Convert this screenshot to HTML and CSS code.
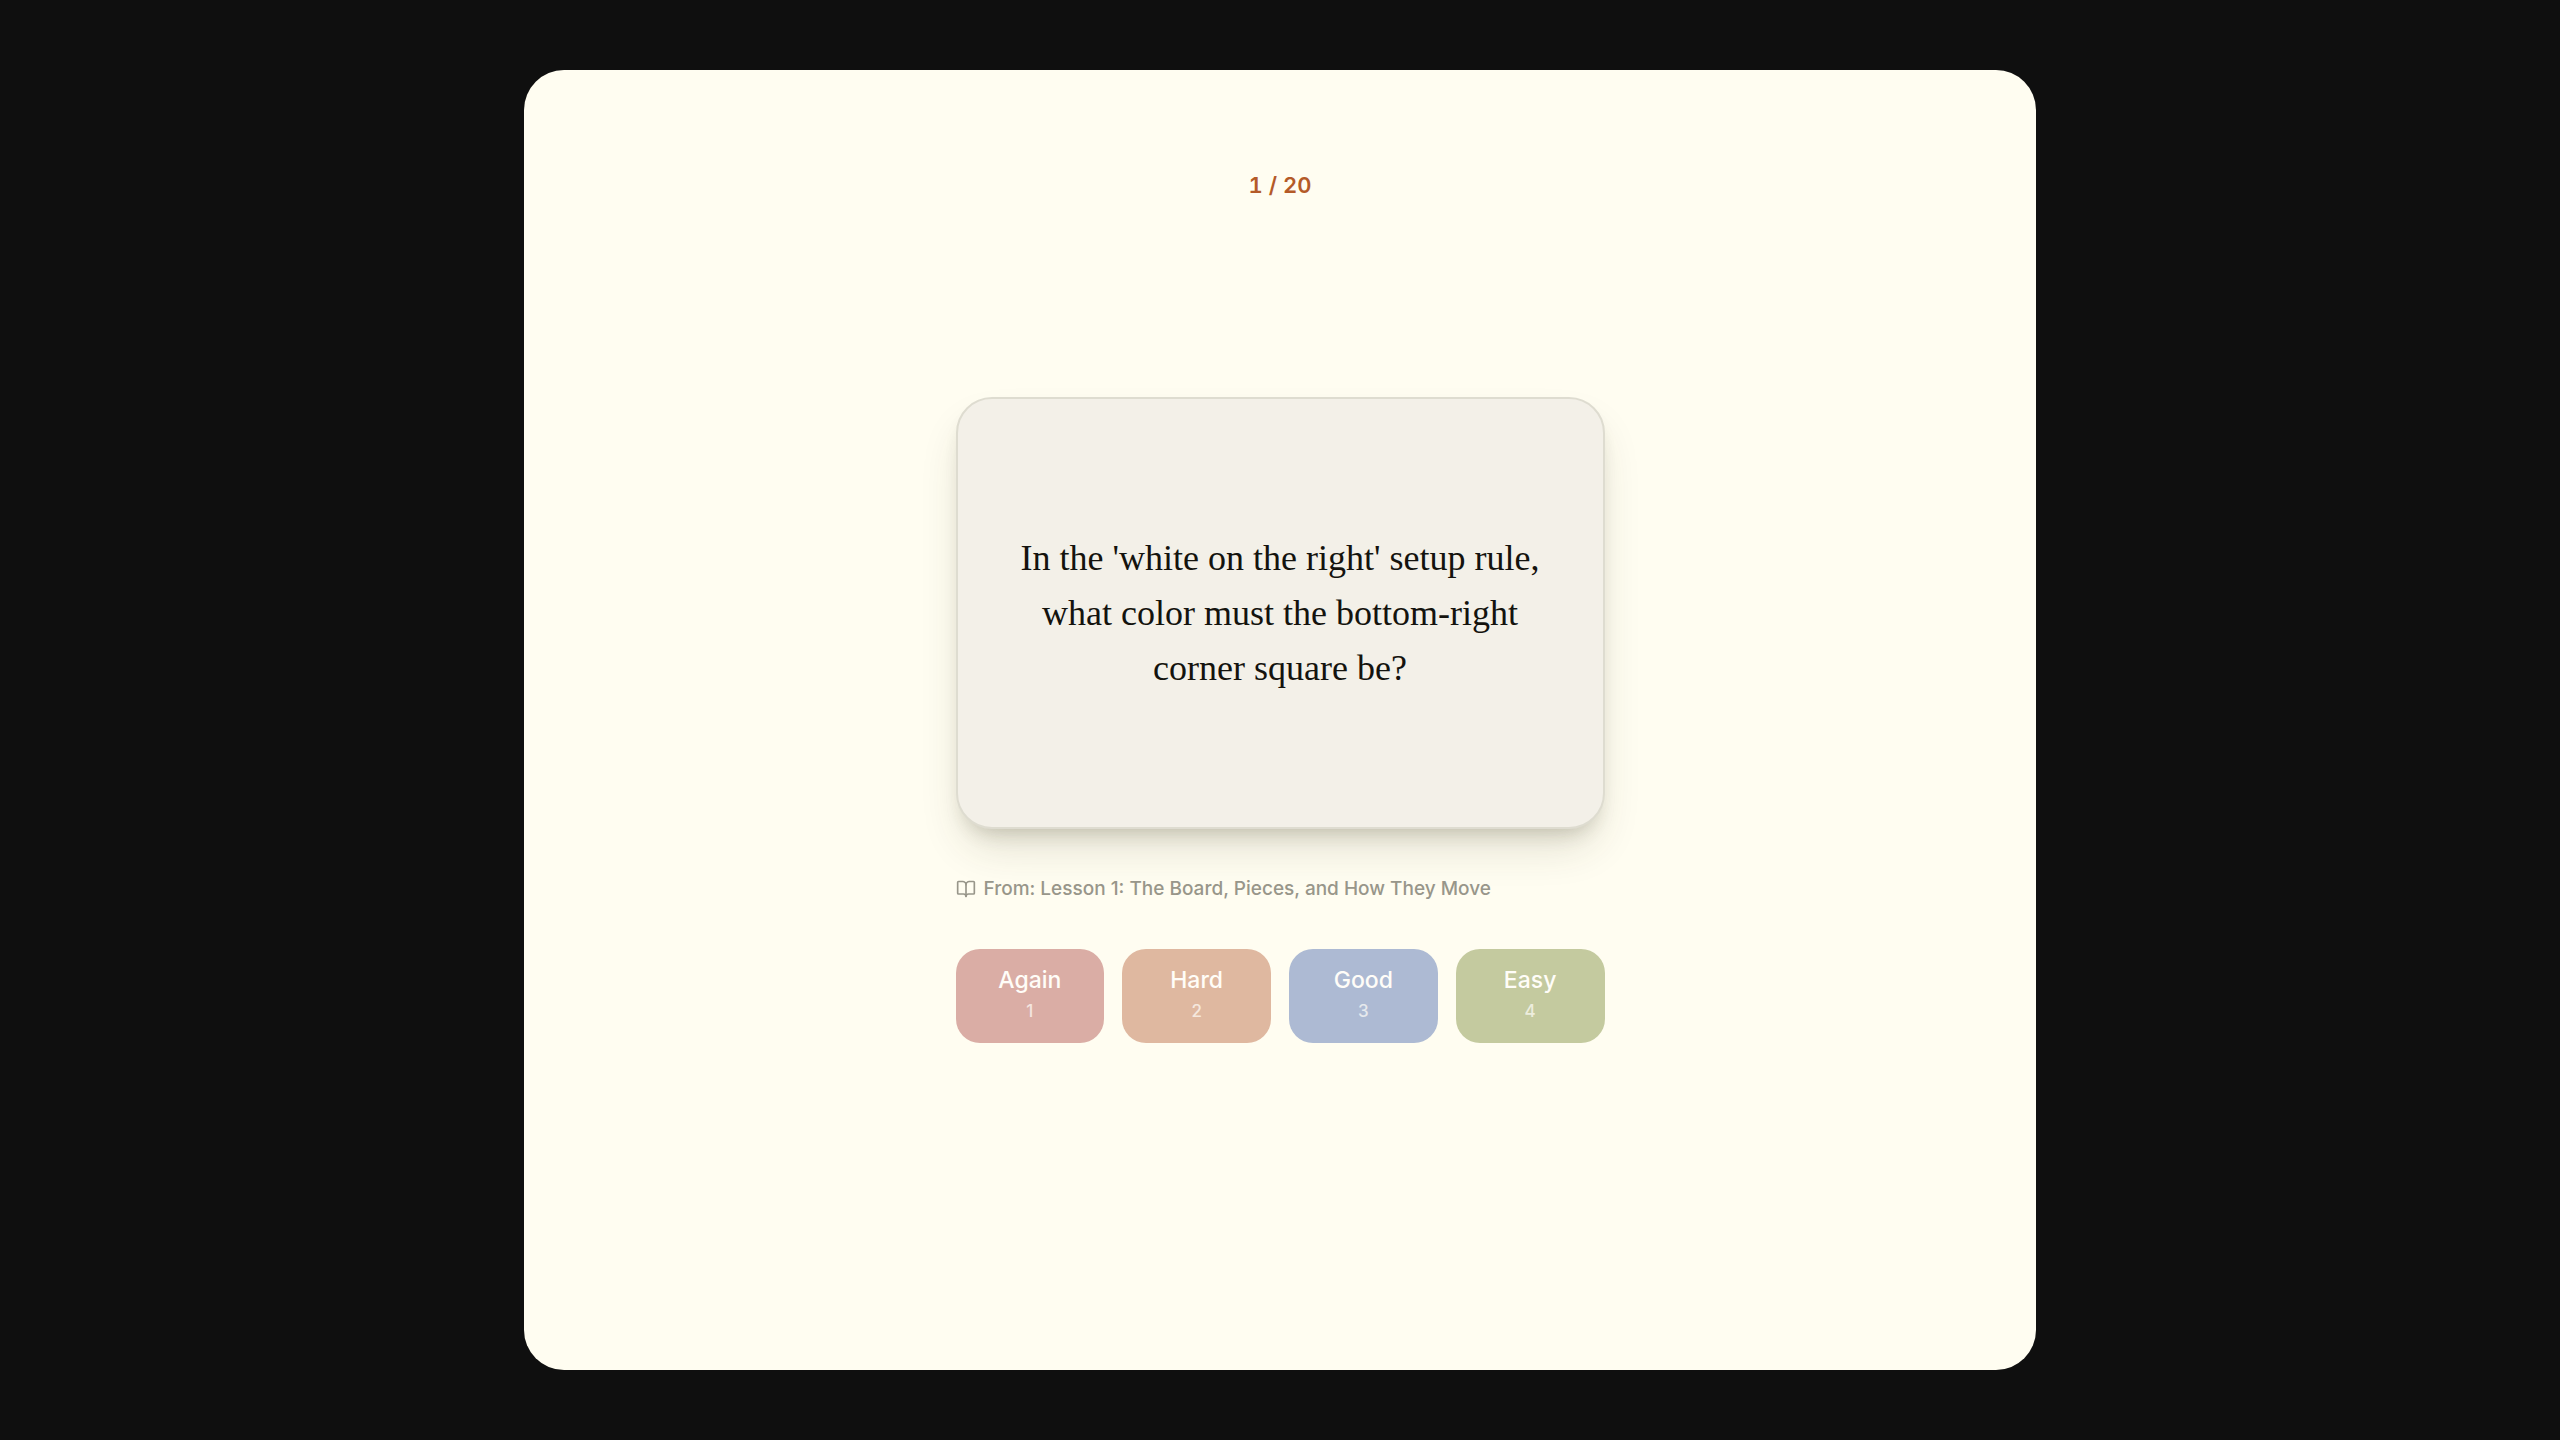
FILE: index.html
```html
<!DOCTYPE html>
<html lang="en">
  <head>
    <meta charset="UTF-8" />
    <meta name="viewport" content="width=device-width, initial-scale=1.0" />
    <title>Flashcards</title>
    <link rel="stylesheet" href="styles.css">
  </head>
  <body>
    <main class="panel">
      <div class="counter">1 / 20</div>
      <div class="review">
        <div class="card">
          <h1 class="question">
            In the 'white on the right' setup rule,<br />
            what color must the bottom-right<br />
            corner square be?
          </h1>
        </div>
        <div class="source">
          <svg class="source-icon" viewBox="0 0 24 24" aria-hidden="true">
            <path d="M12 7v14" />
            <path d="M3 18a1 1 0 0 1-1-1V4a1 1 0 0 1 1-1h5a4 4 0 0 1 4 4 4 4 0 0 1 4-4h5a1 1 0 0 1 1 1v13a1 1 0 0 1-1 1h-6a3 3 0 0 0-3 3 3 3 0 0 0-3-3z" />
          </svg>
          <span>From: Lesson 1: The Board, Pieces, and How They Move</span>
        </div>
        <div class="ratings">
          <button class="rating again">Again <span class="key">1</span></button>
          <button class="rating hard">Hard <span class="key">2</span></button>
          <button class="rating good">Good <span class="key">3</span></button>
          <button class="rating easy">Easy <span class="key">4</span></button>
        </div>
      </div>
    </main>
  </body>
</html>
```

FILE: styles.css
```css
* {
  box-sizing: border-box;
}
body {
  margin: 0;
  padding: 70px 20px;
  min-height: 100vh;
  display: flex;
  justify-content: center;
  background-color: #0f0f0f;
  font-family: Inter, sans-serif;
}
.panel {
  display: grid;
  grid-template-rows: 1fr auto 1fr;
  justify-items: center;
  width: 60%;
  padding: 0 32px;
  border-radius: 40px;
  background-color: #fffdf1;
}
.counter {
  padding: 102px 0 32px;
  color: #b45a28;
  font-size: 22px;
  font-weight: 600;
  font-variant-numeric: tabular-nums;
  line-height: 26px;
}
.review {
  display: flex;
  flex-direction: column;
  gap: 48px;
  width: 100%;
  max-width: 649px;
}
.card {
  display: flex;
  align-items: center;
  justify-content: center;
  aspect-ratio: 3 / 2;
  border: 2px solid #dedcd0;
  border-radius: 36px;
  background-color: #f3f0e8;
  box-shadow: 0 24px 44px -8px rgba(60, 58, 30, 0.16),
    0 12px 20px -10px rgba(60, 58, 30, 0.24);
}
.question {
  margin: 0;
  color: #14130e;
  font-family: "Liberation Serif", serif;
  font-size: 36px;
  font-weight: 400;
  line-height: 55px;
  text-align: center;
}
.source {
  display: flex;
  align-items: center;
  gap: 8px;
  color: #98968a;
  font-size: 19px;
  font-weight: 500;
  line-height: 24px;
}
.source-icon {
  width: 20px;
  height: 20px;
  flex: none;
  fill: none;
  stroke: currentColor;
  stroke-width: 2;
  stroke-linecap: round;
  stroke-linejoin: round;
}
.ratings {
  display: grid;
  grid-template-columns: repeat(4, 1fr);
  gap: 18px;
}
.rating {
  display: flex;
  flex-direction: column;
  align-items: center;
  gap: 2px;
  padding: 14px 8px 20px;
  border: none;
  border-radius: 24px;
  color: #fffdf8;
  font-family: inherit;
  font-size: 23px;
  font-weight: 500;
  line-height: 34px;
  cursor: pointer;
}
.key {
  font-size: 17px;
  font-weight: 500;
  line-height: 24px;
  opacity: 0.7;
}
.again {
  background-color: #daada5;
}
.hard {
  background-color: #dfb8a0;
}
.good {
  background-color: #adbad3;
}
.easy {
  background-color: #c4ca9f;
}
```
